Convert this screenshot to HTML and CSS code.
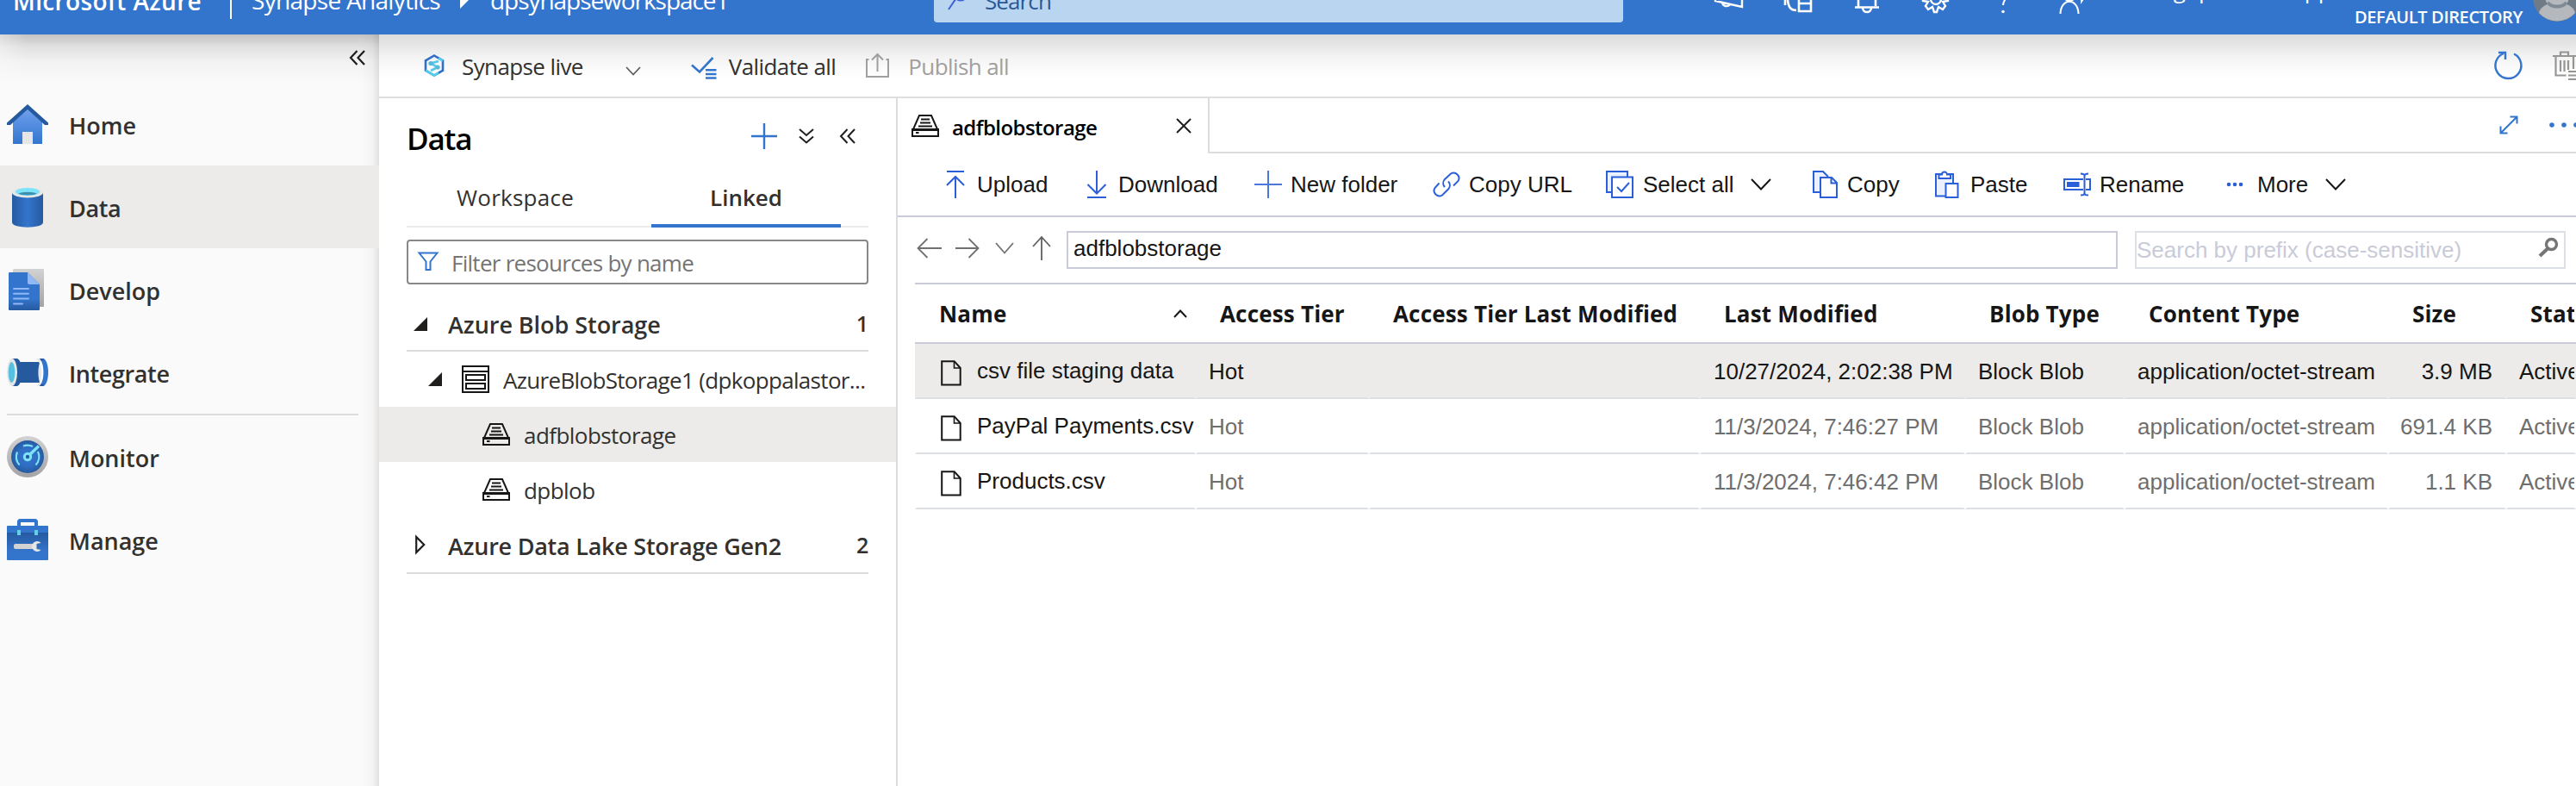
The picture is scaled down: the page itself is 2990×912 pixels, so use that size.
FILE: index.html
```html
<!DOCTYPE html>
<html lang="en">
<head>
<meta charset="utf-8">
<title>Synapse Analytics</title>
<link rel="stylesheet" href="styles.css">
</head>
<body>
<svg class="defs" width="0" height="0">
  <defs>
    <linearGradient id="g-home" x1="0" y1="0" x2="0" y2="1"><stop offset="0" stop-color="#75a4f0"/><stop offset="1" stop-color="#3375cd"/></linearGradient>
    <linearGradient id="g-cyl" x1="0" y1="0" x2="1" y2="0"><stop offset="0" stop-color="#265a9f"/><stop offset=".5" stop-color="#3375cd"/><stop offset="1" stop-color="#265a9f"/></linearGradient>
    <linearGradient id="g-doc" x1="0" y1="0" x2="0" y2="1"><stop offset="0" stop-color="#3375cd"/><stop offset=".7" stop-color="#3375cd"/><stop offset="1" stop-color="#265a9f"/></linearGradient>
    <linearGradient id="g-gray" x1="0" y1="0" x2="0" y2="1"><stop offset="0" stop-color="#d2d2d2"/><stop offset="1" stop-color="#a3a3a6"/></linearGradient>
    <linearGradient id="g-case" x1="0" y1="0" x2="0" y2="1"><stop offset="0" stop-color="#265a9f"/><stop offset=".7" stop-color="#3375cd"/></linearGradient>
    <radialGradient id="g-dial"><stop offset="0" stop-color="#3375cd"/><stop offset=".6" stop-color="#2f6dc2"/><stop offset="1" stop-color="#265a9f"/></radialGradient>
    <symbol id="drive" viewBox="0 0 32 26"><path d="M9 1h14l7.500 17H1.500z" fill="none" stroke="#161616" stroke-width="2"/><path d="M1 17h30v8H1z" fill="none" stroke="#161616" stroke-width="2"/><path d="M11 5.500h10M10 9.500h12M8 13.500h16" stroke="#161616" stroke-width="2"/><path d="M5 21h3.500" stroke="#161616" stroke-width="2"/></symbol>
    <symbol id="file" viewBox="0 0 24 30"><path d="M1.200 1.200h14.500l7 7.800v19.500H1.200z" fill="none" stroke="#161616" stroke-width="2"/><path d="M15.500 1.500v7.500h7" fill="none" stroke="#161616" stroke-width="1.600"/></symbol>
  </defs>
</svg>
<header class="topbar">
  <div class="brand"><span class="t">Microsoft Azure</span></div>
  <i class="sep"></i>
  <div class="crumb product"><span class="t">Synapse Analytics</span></div>
  <svg class="crumb-arrow" width="10" height="14" viewBox="0 0 10 14"><path d="M0 0l10 4L0 14z" fill="#fff"/></svg>
  <div class="crumb workspace"><span class="t">dpsynapseworkspace1</span></div>
  <div class="search">
    <svg width="24" height="30" viewBox="0 0 24 30"><circle cx="15" cy="11" r="7.500" fill="none" stroke="#3f5fd6" stroke-width="2"/><path d="M9.500 16.500L1 29" stroke="#3f5fd6" stroke-width="2"/></svg>
    <span class="t">Search</span>
  </div>
  <div class="top-icons">
    <svg width="34" height="32" viewBox="0 0 34 32"><path d="M1 10L32 3v23L1 19zM9 21a5 5 0 0 0 9 2" fill="none" stroke="#fff" stroke-width="2.400"/></svg>
    <svg width="34" height="32" viewBox="0 0 34 32"><path d="M17 2h14v27H17V2M17 12h14M17 20h14M14 28C7 28 5 24 4 16M1 22V14h9" fill="none" stroke="#fff" stroke-width="2.600"/></svg>
    <svg width="30" height="32" viewBox="0 0 30 32"><path d="M1 24.500h28M5 24V8a10 10 0 0 1 20 0v15M10 25a5 5 0 0 0 10 0" fill="none" stroke="#fff" stroke-width="2.600"/></svg>
    <svg width="34" height="32" viewBox="0 0 34 32"><circle cx="17" cy="15" r="6" fill="none" stroke="#fff" stroke-width="2.400"/><path d="M14 5l1-5h4l1 5 5-3 3 3-3 5 6 1v6l-6 1 3 5-3 4-5-3-2 6h-3l-2-6-5 3-3-4 3-5-6-1v-6l6-1-3-5 3-3z" fill="none" stroke="#fff" stroke-width="2.400"/></svg>
    <svg width="18" height="32" viewBox="0 0 18 32"><path d="M1 6a8 8 0 0 1 16 0c0 6-8 8-8 16" fill="none" stroke="#fff" stroke-width="2"/><circle cx="9" cy="29.500" r="1.800" fill="#fff"/></svg>
    <svg width="30" height="32" viewBox="0 0 30 32"><circle cx="12" cy="10" r="7" fill="none" stroke="#fff" stroke-width="2"/><path d="M1.500 32C2 13 22 13 22.500 32" fill="none" stroke="#fff" stroke-width="2"/><path d="M23 14h2v7l6-9" fill="#fff"/></svg>
  </div>
  <div class="account">
    <div class="name"><span>g</span><span>p</span><span>pp</span><span>@</span></div>
    <div class="dir">DEFAULT DIRECTORY</div>
  </div>
  <svg class="avatar" width="56" height="56" viewBox="0 0 56 56"><circle cx="28" cy="28" r="28" fill="#6f7c88"/><circle cx="28" cy="27" r="14" fill="#b5b8bc"/><path d="M7 46c3-16 39-16 42 0a28 28 0 0 1-42 0z" fill="#b5b8bc"/><path d="M17 34a14 12 0 0 0 22 0" stroke="#7f8a94" stroke-width="4" fill="none"/></svg>
</header>
<div class="shell">
  <nav class="side">
    <svg class="collapse" width="20" height="18" viewBox="0 0 20 18"><path d="M9.500 1L2 9l7.500 8M18 1l-7.500 8L18 17" fill="none" stroke="#201f1e" stroke-width="2.200"/></svg>
    <a class="item"><svg width="48" height="48" viewBox="0 0 48 48"><path d="M24 3L7 19v28h34V19z" fill="url(#g-home)"/><path d="M18 47V33h12v14z" fill="#e6e6e6"/><path d="M24 1L0 22.500V25h4L24 7l20 18h4v-2.500z" fill="#265a9f"/></svg><span class="t">Home</span></a>
    <a class="item on"><svg width="48" height="48" viewBox="0 0 48 48"><path d="M6 7v35c0 7.500 36 7.500 36 0V7z" fill="url(#g-cyl)"/><ellipse cx="24" cy="7.500" rx="18" ry="6" fill="#e6e6e6"/><ellipse cx="24" cy="6.500" rx="14" ry="4.500" fill="#7ee3fa"/><path d="M13 8.800c4-2.800 18-2.800 22 0-5 2.200-17 2.200-22 0z" fill="#3f8fb0"/></svg><span class="t tight">Data</span></a>
    <a class="item"><svg width="48" height="48" viewBox="0 0 48 48"><path d="M8 0h34a1 1 0 0 1 1 1v42a1 1 0 0 1-1 1H30L7 10V1z" fill="url(#g-gray)"/><path d="M2 5a1 1 0 0 1 1-1h21l14 14v29a1 1 0 0 1-1 1H3a1 1 0 0 1-1-1z" fill="url(#g-doc)"/><path d="M24 4l14 14H26a2 2 0 0 1-2-2z" fill="#8fb8f5"/><path d="M8 23h17M8 28.700h17M8 34.500h17M8 40.500h10" stroke="#8fb8f5" stroke-width="2" stroke-linecap="round"/></svg><span class="t">Develop</span></a>
    <a class="item"><svg width="48" height="48" viewBox="0 0 48 48"><path d="M10 12h28v24H10z" fill="#265a9f"/><path d="M6 8h6c7 2 7 30 0 32H6z" fill="#265a9f"/><ellipse cx="6" cy="24" rx="6" ry="16" fill="#e6e6e6"/><ellipse cx="5.500" cy="24" rx="3.800" ry="12" fill="#56c0e0"/><path d="M34 8h7c-6 4-6 28 0 32h-6c7-8 7-24-1-32z" fill="#e6e6e6"/><path d="M38 8h4c8 2 8 30 0 32h-4c6-6 6-26 0-32z" fill="#3375cd"/><path d="M38 8h4l2 1-4 2zM38 40h4l2-1-4-2z" fill="#265a9f"/></svg><span class="t tight">Integrate</span></a>
    <hr>
    <a class="item"><svg width="48" height="48" viewBox="0 0 48 48"><circle cx="24" cy="24" r="24" fill="url(#g-gray)"/><circle cx="24" cy="24" r="19" fill="url(#g-dial)"/><path d="M12 18.500a13 14 0 0 0 2.500 15M19 11.500a14 14 0 0 1 11 .5M36 18a14 14 0 0 1-2.500 15.500" fill="none" stroke="#7ee3fa" stroke-width="2.200"/><path d="M26 22L37 11.500" stroke="#7ee3fa" stroke-width="3.400"/><circle cx="24" cy="24" r="3.700" fill="#265a9f" stroke="#7ee3fa" stroke-width="3"/></svg><span class="t">Monitor</span></a>
    <a class="item"><svg width="48" height="48" viewBox="0 0 48 48"><path d="M14 9V3.500A1.500 1.500 0 0 1 15.500 2h17A1.500 1.500 0 0 1 34 3.500V9" fill="none" stroke="#3375cd" stroke-width="4"/><path d="M0 9a1 1 0 0 1 1-1h46a1 1 0 0 1 1 1v8H0z" fill="#3375cd"/><path d="M0 16h48v31a1 1 0 0 1-1 1H1a1 1 0 0 1-1-1z" fill="url(#g-case)"/><path d="M12 13h4v6h-4zM32 13h4v6h-4z" fill="#64cfe6"/><path d="M10 29h20v6H10a2 2 0 0 1-2-2v-2a2 2 0 0 1 2-2z" fill="#d2d2d2"/><path d="M39.500 28a6 6 0 1 0 0 8l-5-1v-6z" fill="#e6e6e6"/></svg><span class="t">Manage</span></a>
  </nav>
  <div class="work">
    <div class="cmdbar">
      <svg width="24" height="26" viewBox="0 0 24 26"><path d="M12 1.500l10 5.800v11.400L12 24.500 2 18.700V7.300z" fill="none" stroke="#2f6fc8" stroke-width="2.600"/><path d="M2 18.700L12 24.500l5-3M22 7.300l-5-3" fill="none" stroke="#4fd0ea" stroke-width="2.600"/><path d="M17 8L8 10.500l8 4.500-8 4" fill="none" stroke="#56c8e8" stroke-width="2.600"/><circle cx="8" cy="10.500" r="2.600" fill="#56b8dc"/><circle cx="16" cy="15" r="2.600" fill="#56b8dc"/></svg>
      <span class="t">Synapse live</span>
      <svg class="drop" width="18" height="11" viewBox="0 0 18 11"><path d="M1 1l8 8.500L17 1" fill="none" stroke="#605e5c" stroke-width="1.800"/></svg>
      <svg class="val" width="30" height="26" viewBox="0 0 30 26"><path d="M1 9.500l9 8L25.500 1" fill="none" stroke="#3375cd" stroke-width="2.600"/><path d="M17 15.200h12.500M17 20h12.500M17 24.500h12.500" stroke="#3375cd" stroke-width="2.400"/></svg>
      <span class="t">Validate all</span>
      <svg class="pub" width="28" height="30" viewBox="0 0 28 30"><path d="M3.500 8H1v20h25V8h-2.500" fill="none" stroke="#a19f9d" stroke-width="2"/><path d="M13.500 22V2M7 8.500L13.500 2 20 8.500" fill="none" stroke="#a19f9d" stroke-width="2"/></svg>
      <span class="t off">Publish all</span>
      <svg class="refresh" width="34" height="34" viewBox="0 0 34 34"><path d="M22 3.500A15 15 0 1 1 10 3" fill="none" stroke="#3375cd" stroke-width="2.400"/><path d="M4 2h8v8" fill="none" stroke="#3375cd" stroke-width="2.400"/></svg>
      <svg class="trash" width="27" height="34" viewBox="0 0 27 34"><path d="M0 6h27M9 5V1.500h9V5M3.500 6v22.500h12M24 6v15M9 11v13M13.500 11v13M18 11v11" fill="none" stroke="#979593" stroke-width="2.200"/><path d="M18 24h9M18 28.500h9M18 33h9" stroke="#979593" stroke-width="2.200"/></svg>
    </div>
    <div class="cols">
      <aside class="data">
        <div class="data-head"><h2 class="t">Data</h2>
          <svg class="plus" width="32" height="32" viewBox="0 0 32 32"><path d="M16 1v30M1 16h30" stroke="#3375cd" stroke-width="2.400"/></svg>
          <svg class="dd" width="18" height="18" viewBox="0 0 18 18"><path d="M1 1l8 7 8-7M1 9.500l8 7 8-7" fill="none" stroke="#201f1e" stroke-width="2"/></svg>
          <svg class="ll" width="20" height="18" viewBox="0 0 20 18"><path d="M9.500 1L2 9l7.500 8M18 1l-7.500 8L18 17" fill="none" stroke="#201f1e" stroke-width="2"/></svg>
        </div>
        <div class="tabs"><span>Workspace</span><span class="on">Linked</span></div>
        <div class="filter"><svg width="24" height="22" viewBox="0 0 24 22"><path d="M1.500 1.500h21l-8 10V21h-5v-9.500z" fill="none" stroke="#3375cd" stroke-width="2"/></svg><span class="t">Filter resources by name</span></div>
        <div class="group"><svg class="tri" width="16" height="16"><path d="M0 16L16 0v16z" fill="#201f1e"/></svg><span class="t">Azure Blob Storage</span><em>1</em></div>
        <div class="leaf svc"><svg class="tri" width="16" height="16"><path d="M0 16L16 0v16z" fill="#201f1e"/></svg><svg width="32" height="32"><path d="M1 1h30v30H1zM1 7h30M5 11h22v6H5zM5 21h22v6H5z" fill="none" stroke="#161616" stroke-width="2"/></svg><span class="t">AzureBlobStorage1 (dpkoppalastor...</span></div>
        <div class="leaf sub on"><svg width="32" height="26"><use href="#drive"/></svg><span class="t">adfblobstorage</span></div>
        <div class="leaf sub"><svg width="32" height="26"><use href="#drive"/></svg><span class="t">dpblob</span></div>
        <div class="group"><svg class="tri open" width="12" height="24"><path d="M1.200 3v18l9-9z" fill="none" stroke="#201f1e" stroke-width="2.200"/></svg><span class="t">Azure Data Lake Storage Gen2</span><em>2</em></div>
      </aside>
      <main>
        <div class="tabbar">
          <div class="tab"><svg width="32" height="26"><use href="#drive"/></svg><span class="t">adfblobstorage</span><svg class="x" width="18" height="18" viewBox="0 0 18 18"><path d="M1 1l16 16M17 1L1 17" stroke="#201f1e" stroke-width="2"/></svg></div>
          <div class="rest"><svg width="22" height="22" viewBox="0 0 22 22"><path d="M2 20L20 2M12.500 1.500h8v8M1.500 12.500v8h8" fill="none" stroke="#3375cd" stroke-width="2"/></svg><svg class="dots" width="31" height="8" viewBox="0 0 31 8"><g fill="#3375cd"><circle cx="3" cy="4" r="2.800"/><circle cx="17" cy="4" r="2.800"/><circle cx="31" cy="4" r="2.800"/></g></svg></div>
        </div>
        <div class="tools">
          <svg width="22" height="32"><path d="M1 1h20M11 32V7M1 17L11 7l10 10" fill="none" stroke="#2b5fd9" stroke-width="2"/></svg><span>Upload</span>
          <svg width="24" height="32"><path d="M1 31h22M12 0v26M1.500 16L12 26.500 22.500 16" fill="none" stroke="#2b5fd9" stroke-width="2"/></svg><span>Download</span>
          <svg width="32" height="32"><path d="M16 0v32M0 16h32" stroke="#2b5fd9" stroke-width="2" opacity=".85"/></svg><span>New folder</span>
          <svg width="32" height="32" viewBox="0 0 32 32"><g fill="none" stroke="#2b5fd9" stroke-width="2"><path d="M14 19a6.500 6.500 0 0 1-.5-8.500L21 3.500a6.200 6.200 0 0 1 8.500 8.500L24 17.500"/><path d="M18 12.500a6.500 6.500 0 0 1 .5 8.500L11 28.500A6.200 6.200 0 0 1 2.500 20L7.500 14.500"/></g></svg><span>Copy URL</span>
          <svg width="32" height="32"><path d="M7 25H1V1h24v6" fill="#eaf0fc" stroke="#2b5fd9" stroke-width="2"/><path d="M7 7.500h24V31H7z" fill="#fff" stroke="#2b5fd9" stroke-width="2"/><path d="M13 19l5 5 9-10" fill="none" stroke="#2b5fd9" stroke-width="2"/></svg><span>Select all</span>
          <svg width="24" height="14"><path d="M1 1l11 11.500L23 1" fill="none" stroke="#161616" stroke-width="2"/></svg>
          <svg width="30" height="32"><path d="M8 25H1V1h11l6 6" fill="#eaf0fc" stroke="#2b5fd9" stroke-width="2"/><path d="M9 8h13l6 6v17H9zM21.500 8v6.500H28" fill="#fff" stroke="#2b5fd9" stroke-width="2"/></svg><span>Copy</span>
          <svg width="28" height="32"><path d="M12 29.500H1V4h20v10" fill="#eaf0fc" stroke="#2b5fd9" stroke-width="2"/><path d="M4.500 9V4.500H8a3 3 0 0 1 6 0h4V9zM12.500 15h14v16h-14z" fill="#fff" stroke="#2b5fd9" stroke-width="2"/></svg><span>Paste</span>
          <svg width="32" height="28"><path d="M23 8H1v12h22M26 8h5v12h-5" fill="none" stroke="#2b5fd9" stroke-width="2"/><path d="M4 11h14.500v6H4z" fill="#2b5fd9"/><path d="M24.500 3v22M20 1.500c2.500 0 4.500 0 4.500 2.500 0-2.500 2-2.500 4.500-2.500M20 26.500c2.500 0 4.500 0 4.500-2.500 0 2.500 2 2.500 4.500 2.500" fill="none" stroke="#2b5fd9" stroke-width="2"/></svg><span>Rename</span>
          <svg width="20" height="6"><g fill="#2b5fd9"><circle cx="3" cy="3" r="2.300"/><circle cx="10" cy="3" r="2.300"/><circle cx="17" cy="3" r="2.300"/></g></svg><span>More</span>
          <svg width="24" height="14"><path d="M1 1l11 11.500L23 1" fill="none" stroke="#161616" stroke-width="2"/></svg>
        </div>
        <div class="pathbar">
          <svg width="30" height="24" viewBox="0 0 30 24"><path d="M29 12H2M12.500 1L1.500 12l11 11" fill="none" stroke="#707070" stroke-width="1.800"/></svg>
          <svg width="28" height="24" viewBox="0 0 28 24"><path d="M0 12h26.500M15.500 1l11 11-11 11" fill="none" stroke="#707070" stroke-width="1.800"/></svg>
          <svg width="22" height="14" viewBox="0 0 22 14"><path d="M1 1l10 11.500L21 1" fill="none" stroke="#707070" stroke-width="1.800"/></svg>
          <svg width="22" height="30" viewBox="0 0 22 30"><path d="M11 29V2M1 13L11 2l10 11" fill="none" stroke="#606060" stroke-width="1.800"/></svg>
          <div class="path">adfblobstorage</div>
          <div class="prefix"><span>Search by prefix (case-sensitive)</span><svg width="24" height="24" viewBox="0 0 24 24"><circle cx="15.500" cy="8.500" r="6" fill="none" stroke="#757575" stroke-width="3.400"/><path d="M11.500 13L2 22" stroke="#757575" stroke-width="4"/></svg></div>
        </div>
        <div class="grid">
          <div class="gr head"><div><span>Name</span><svg width="16" height="10"><path d="M1 9l7-7.500L15 9" fill="none" stroke="#161616" stroke-width="2"/></svg></div><div>Access Tier</div><div>Access Tier Last Modified</div><div>Last Modified</div><div>Blob Type</div><div>Content Type</div><div>Size</div><div>Status</div></div>
          <div class="gr on"><div><svg width="24" height="30"><use href="#file"/></svg><span>csv file staging data</span></div><div>Hot</div><div></div><div>10/27/2024, 2:02:38 PM</div><div>Block Blob</div><div>application/octet-stream</div><div>3.9 MB</div><div>Active</div></div>
          <div class="gr"><div><svg width="24" height="30"><use href="#file"/></svg><span>PayPal Payments.csv</span></div><div>Hot</div><div></div><div>11/3/2024, 7:46:27 PM</div><div>Block Blob</div><div>application/octet-stream</div><div>691.4 KB</div><div>Active</div></div>
          <div class="gr"><div><svg width="24" height="30"><use href="#file"/></svg><span>Products.csv</span></div><div>Hot</div><div></div><div>11/3/2024, 7:46:42 PM</div><div>Block Blob</div><div>application/octet-stream</div><div>1.1 KB</div><div>Active</div></div>
        </div>
      </main>
    </div>
  </div>
</div>
</body>
</html>
```

FILE: styles.css
```css
* { box-sizing: border-box; }
body { margin: 0; width: 2990px; height: 912px; overflow: hidden; background: #fff; font: 26px "Open Sans", "Noto Sans", sans-serif; color: #323130; }
svg { display: block; flex: none; overflow: visible; }
.defs { position: absolute; }
.t { display: inline-block; white-space: nowrap; flex: none; }
h2, em, i { margin: 0; font-style: normal; font-weight: inherit; }

/* top bar */
.topbar { height: 40px; display: flex; align-items: flex-start; background: #3375cd; color: #fff; overflow: hidden; padding-left: 15px; }
.topbar > * { flex: none; }
.brand { width: 252px; font-size: 28px; font-weight: 600; line-height: 38px; margin-top: -18px; letter-spacing: .35px; }
.sep { width: 2px; height: 22px; background: #fff; margin-right: 23px; }
.crumb { font-size: 28px; line-height: 38px; margin-top: -19px; }
.product { width: 242px; letter-spacing: -.7px; }
.crumb-arrow { margin: -4px 25px 0 0; }
.workspace { width: 515px; letter-spacing: -1.05px; }
.search { width: 800px; height: 46px; margin-top: -20px; padding: 2px 0 0 16px; display: flex; gap: 19px; background: #b9d5f0; border-radius: 4px; color: #2b5896; line-height: 38px; letter-spacing: -.9px; }
.top-icons { width: 420px; margin: -16px 0 0 106px; display: grid; grid-template-columns: 81px 81px 78px 86px 74px 22px; }
.top-icons svg:nth-child(1) { margin-top: -2px; }
.account { width: 628px; margin: 0 12px 0 -110px; text-align: right; }
.account .name { height: 32px; line-height: 32px; margin-top: -28px; display: flex; justify-content: flex-end; }
.account .name span:nth-child(1) { margin-right: 15px; }
.account .name span:nth-child(2) { margin-right: 107px; }
.account .name span:nth-child(3) { margin-right: 32px; }
.account .name span:nth-child(4) { margin-right: 166px; }
.account .dir { font-size: 20px; font-weight: 600; line-height: 24px; margin-top: 4px; letter-spacing: -.35px; }
.avatar { margin-top: -31px; }

/* shell */
.shell { display: flex; height: 872px; }
.side { position: relative; width: 440px; padding-top: 18px; background: linear-gradient(to left, rgba(0,0,0,.1), rgba(0,0,0,.025) 8px, transparent 20px), #fafafa; }
.side::before { content: ""; position: absolute; inset: 0 0 auto 0; height: 56px; background: linear-gradient(rgba(0,0,0,.22), rgba(0,0,0,.1) 14px, rgba(0,0,0,.035) 30px, transparent); mask-image: linear-gradient(to right, rgba(0,0,0,.55), #000 30px); }
.collapse { margin: 0 0 20px 405px; }
.item { display: flex; align-items: center; height: 96px; padding: 0 0 0 8px; gap: 24px; font-size: 27px; font-weight: 600; }
.item span { padding-top: 2px; }
.item .tight { letter-spacing: -.4px; }
.item.on { background: #ecebe9; }
.side hr { margin: 0 24px 0 8px; border: 0; height: 2px; background: #dcdcdc; }
.work { flex: 1; min-width: 0; }
.cmdbar { height: 74px; border-bottom: 2px solid #dedede; display: flex; align-items: center; padding-left: 52px; background: linear-gradient(#dcdcdc, #e4e4e4 10px, #f3f3f3 26px, #fcfcfc 42px, #fff 52px); letter-spacing: -.6px; }
.cmdbar .t { margin: 1px 0 0 20px; }
.cmdbar .off { color: #a19f9d; margin-left: 21px; }
.cmdbar .drop { margin: 13px 0 0 49px; }
.cmdbar .val { margin: 6px 0 0 58px; }
.cmdbar .val + .t { margin-left: 14px; }
.cmdbar .pub { margin-left: 35px; }
.refresh { margin-left: auto; }
.trash { margin: 0 0 0 33px; }
.cols { display: flex; height: 798px; }

/* data panel */
.data { width: 602px; border-right: 2px solid #dcdcdc; }
.data-head { height: 88px; display: flex; align-items: center; padding: 4px 46px 0 32px; }
.data-head h2 { font-size: 35px; font-weight: 600; letter-spacing: -1.2px; color: #000; margin-right: auto; }
.data-head svg { margin-top: -4px; }
.plus { margin-right: 24px; }
.dd { margin-right: 29px; }
.tabs { height: 62px; margin: 0 32px; display: grid; grid-template-columns: 260px 276px; border-bottom: 2px solid #ebebeb; line-height: 54px; }
.tabs span { padding-left: 58px; letter-spacing: .25px; }
.tabs .on { width: 220px; margin-left: 24px; padding: 0; text-align: center; height: 62px; border-bottom: 4px solid #3375cd; font-weight: 600; letter-spacing: 0; }
.filter { height: 52px; margin: 14px 32px 22px; border: 2px solid #8a8886; border-radius: 4px; display: flex; align-items: center; padding-left: 11px; gap: 15px; color: #757575; letter-spacing: -.73px; }
.filter svg { margin-top: -2px; }
.filter span { margin-top: 1px; }
.group { height: 56px; margin: 0 32px; display: flex; align-items: center; border-bottom: 2px solid #dcdcdc; font-size: 27px; font-weight: 600; padding: 0 0 6px 8px; letter-spacing: -.05px; }
.group .tri { margin: 0 24px 0 0; }
.group .open { margin: -3px 26px 0 2px; }
.group em { margin: -2px 0 0 auto; font-size: 25px; font-weight: 600; }
.leaf { height: 64px; display: flex; align-items: center; letter-spacing: -.67px; }
.leaf span { margin: 2px 0 0 16px; }
.svc { padding-left: 57px; }
.svc .tri { margin-right: 23px; }
.sub { padding-left: 120px; letter-spacing: -.55px; }
.sub svg { margin-top: -1px; }
.sub.on { background: #ecebe9; }
.sub + .group { height: 66px; padding: 2px 0 0 8px; letter-spacing: -.25px; }

/* blob explorer */
main { flex: 1; min-width: 0; font-family: "Liberation Sans", Arial, sans-serif; color: #161616; }
.tabbar { display: flex; height: 64px; }
.tab { width: 362px; border-right: 2px solid #dcdcdc; display: flex; align-items: center; padding-left: 16px; font: 600 24px "Open Sans", sans-serif; letter-spacing: -.55px; color: #000; }
.tab .t { margin: 2px 0 0 15px; }
.tab .x { margin: 0 19px 0 auto; }
.rest { flex: 1; border-bottom: 2px solid #dcdcdc; display: flex; align-items: center; justify-content: flex-end; gap: 36px; }
.tools { height: 74px; border-bottom: 2px solid #c9cbd8; display: grid; align-items: center; white-space: nowrap; padding-left: 56px;
  grid-template-columns: 36px 127px 37px 158px 42px 165px 42px 159px 43px 125px 72px 40px 102px 41px 108px 42px 147px 36px 79px 24px; }
.pathbar { height: 76px; display: flex; align-items: center; padding-left: 22px; }
.pathbar > svg { margin-top: -4px; }
.pathbar > svg:nth-child(2) { margin-left: 15px; }
.pathbar > svg:nth-child(3) { margin-left: 18px; }
.pathbar > svg:nth-child(4) { margin: -4px 18px 0 21px; }
.path { width: 1220px; height: 44px; border: 2px solid #c9cbd8; line-height: 37px; padding-left: 6px; }
.prefix { width: 500px; height: 44px; margin-left: 20px; border: 2px solid #dce0e4; display: flex; justify-content: space-between; padding-right: 6px; line-height: 41px; color: #c9cbd8; }
.prefix svg { margin-top: 5px; }
.grid { margin-left: 20px; border-top: 2px solid #c9cbd8; }
.gr { display: grid; grid-template-columns: 326px 201px 384px 308px 185px 306px 137px 81px; grid-template-rows: 64px; height: 64px; color: #6e6e6e; overflow: hidden; white-space: nowrap; }
.gr > div { border: solid transparent; border-width: 0 2px 2px; border-bottom-color: #dce0e4; padding-left: 13px; line-height: 64px; overflow: hidden; }
.gr > div:first-child { display: flex; padding-left: 28px; align-items: center; color: #161616; overflow: visible; }
.gr > div:first-child svg { margin-top: 6px; }
.gr > div:first-child span { margin-left: 18px; }
.gr > div:nth-child(4) { padding-left: 14px; }
.gr > div:nth-child(7) { text-align: right; padding: 0 14px 0 0; }
.gr.on { background: #ecebe9; color: #161616; }
.gr.head { height: 69px; grid-template-rows: 67px; border-bottom: 2px solid #c9cbd8; font: 700 26px "Open Sans", sans-serif; letter-spacing: .18px; color: #161616; }
.gr.head > div { border-bottom: 0; padding-left: 26px; line-height: 68px; text-align: left; }
.gr.head > div:first-child { padding-left: 26px; }
.gr.head > div:first-child span { margin-left: 0; }
.gr.head > div:first-child svg { margin: 0 8px 0 auto; }
```
